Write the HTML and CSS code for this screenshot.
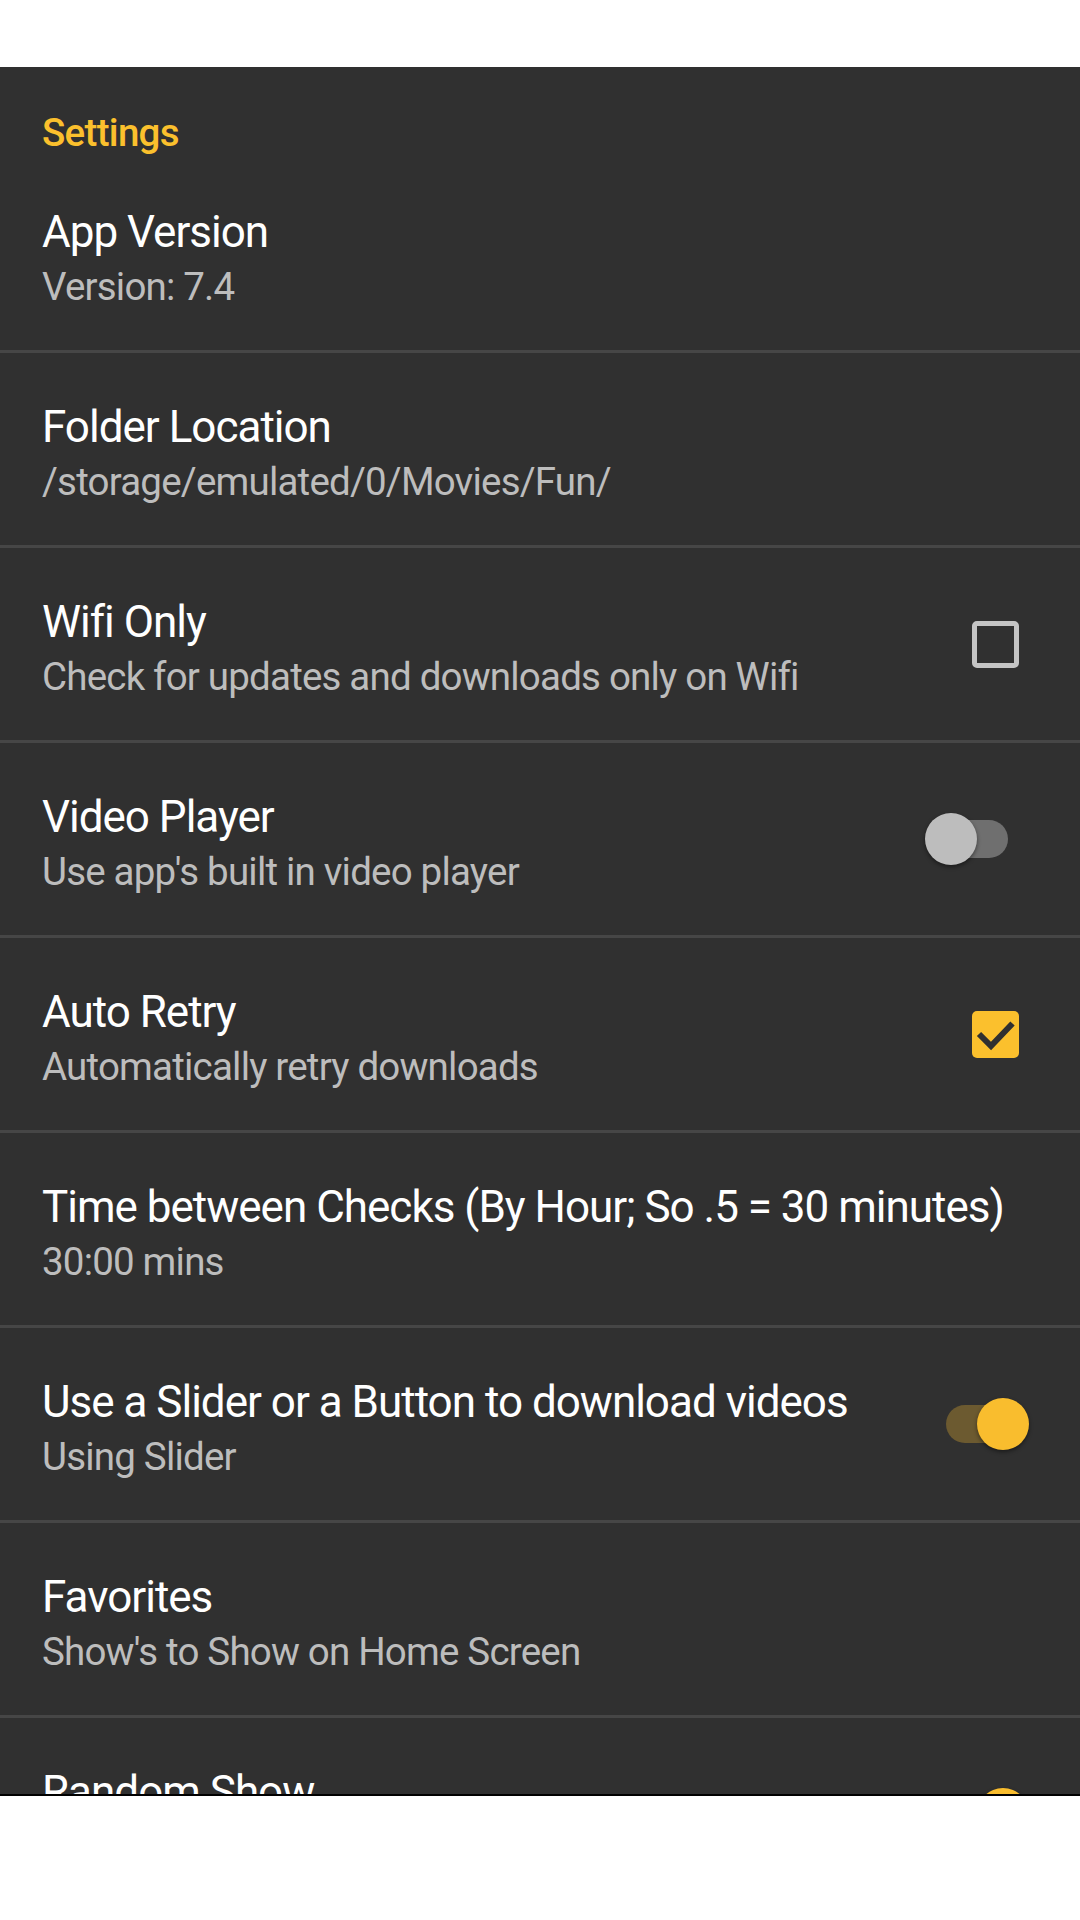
FILE: index.html
```html
<!DOCTYPE html>
<html>
<head>
<meta charset="utf-8">
<link rel="stylesheet" href="styles.css">
</head>
<body>
<div class="top-space"></div>
<div class="screen">
  <div class="category">Settings</div>

  <div class="pref">
    <div class="texts">
      <div class="title">App Version</div>
      <div class="summary">Version: 7.4</div>
    </div>
  </div>

  <div class="pref">
    <div class="texts">
      <div class="title">Folder Location</div>
      <div class="summary">/storage/emulated/0/Movies/Fun/</div>
    </div>
  </div>

  <div class="pref">
    <div class="texts">
      <div class="title">Wifi Only</div>
      <div class="summary">Check for updates and downloads only on Wifi</div>
    </div>
    <div class="widget widget-check">
      <div class="checkbox"></div>
    </div>
  </div>

  <div class="pref">
    <div class="texts">
      <div class="title">Video Player</div>
      <div class="summary">Use app's built in video player</div>
    </div>
    <div class="widget widget-switch-off">
      <div class="switch">
        <div class="track"></div>
        <div class="thumb"></div>
      </div>
    </div>
  </div>

  <div class="pref">
    <div class="texts">
      <div class="title">Auto Retry</div>
      <div class="summary">Automatically retry downloads</div>
    </div>
    <div class="widget widget-check">
      <div class="checkbox checked">
        <svg width="47" height="47" viewBox="0 0 47 47"><path d="M7 23 L19 35 L40.5 12.5" fill="none" stroke="#303030" stroke-width="6"/></svg>
      </div>
    </div>
  </div>

  <div class="pref">
    <div class="texts">
      <div class="title">Time between Checks (By Hour; So .5 = 30 minutes)</div>
      <div class="summary">30:00 mins</div>
    </div>
  </div>

  <div class="pref">
    <div class="texts">
      <div class="title">Use a Slider or a Button to download videos</div>
      <div class="summary">Using Slider</div>
    </div>
    <div class="widget widget-switch-on">
      <div class="switch on">
        <div class="track"></div>
        <div class="thumb"></div>
      </div>
    </div>
  </div>

  <div class="pref">
    <div class="texts">
      <div class="title">Favorites</div>
      <div class="summary">Show's to Show on Home Screen</div>
    </div>
  </div>

  <div class="pref">
    <div class="texts">
      <div class="title">Random Show</div>
      <div class="summary">Show a random show on Home Screen</div>
    </div>
    <div class="widget widget-switch-on">
      <div class="switch on">
        <div class="track"></div>
        <div class="thumb"></div>
      </div>
    </div>
  </div>
</div>
<div class="bottom-space"></div>
</body>
</html>
```
FILE: styles.css
```css
html, body {
  margin: 0;
  padding: 0;
  background: #ffffff;
}

body {
  width: 1080px;
  height: 1920px;
  overflow: hidden;
  font-family: Roboto, "Noto Sans", "Liberation Sans", sans-serif;
}

.top-space {
  height: 67px;
  background: #ffffff;
}

.screen {
  height: 1727px;
  background: #303030;
  overflow: hidden;
}

.bottom-space {
  height: 126px;
  border-top: 2px solid #000000;
  background: #ffffff;
}

.category {
  color: #fbc02d;
  font-size: 38.5px;
  font-weight: 500;
  letter-spacing: -0.7px;
  line-height: 45px;
  padding: 43px 0 3px 42px;
}

.pref {
  display: flex;
  align-items: center;
  padding: 48px 0 40px 42px;
  border-bottom: 3px solid #464646;
}

.texts {
  flex: 1;
  min-width: 0;
}

.title {
  color: #ffffff;
  font-size: 44px;
  letter-spacing: -1px;
  line-height: 52px;
  white-space: nowrap;
}

.summary {
  color: #bdbdbd;
  font-size: 38.5px;
  letter-spacing: -0.8px;
  line-height: 46px;
  margin-top: 6px;
  white-space: nowrap;
}

.widget {
  display: flex;
  align-items: center;
  justify-content: flex-end;
  margin-top: -8px;
}

.widget-check {
  padding-right: 61px;
}

.widget-switch-off {
  padding-right: 65px;
}

.widget-switch-on {
  padding-right: 51px;
}

.checkbox {
  width: 37px;
  height: 37px;
  border: 5px solid #c4c4c4;
  border-radius: 5px;
}

.checkbox.checked {
  width: 47px;
  height: 47px;
  border: none;
  background: #fbc02d;
}

.checkbox svg {
  display: block;
}

.switch {
  position: relative;
  width: 90px;
  height: 52px;
}

.track {
  position: absolute;
  left: 7px;
  top: 7px;
  width: 76px;
  height: 38px;
  border-radius: 19px;
  background: #6f6f6f;
}

.thumb {
  position: absolute;
  left: 0;
  top: 0;
  width: 52px;
  height: 52px;
  border-radius: 50%;
  background: #bdbdbd;
  box-shadow: 0 2px 4px rgba(0, 0, 0, 0.45);
}

.switch.on .track {
  background: #6c5a30;
}

.switch.on .thumb {
  left: 38px;
  background: #f9bd2e;
}
```
